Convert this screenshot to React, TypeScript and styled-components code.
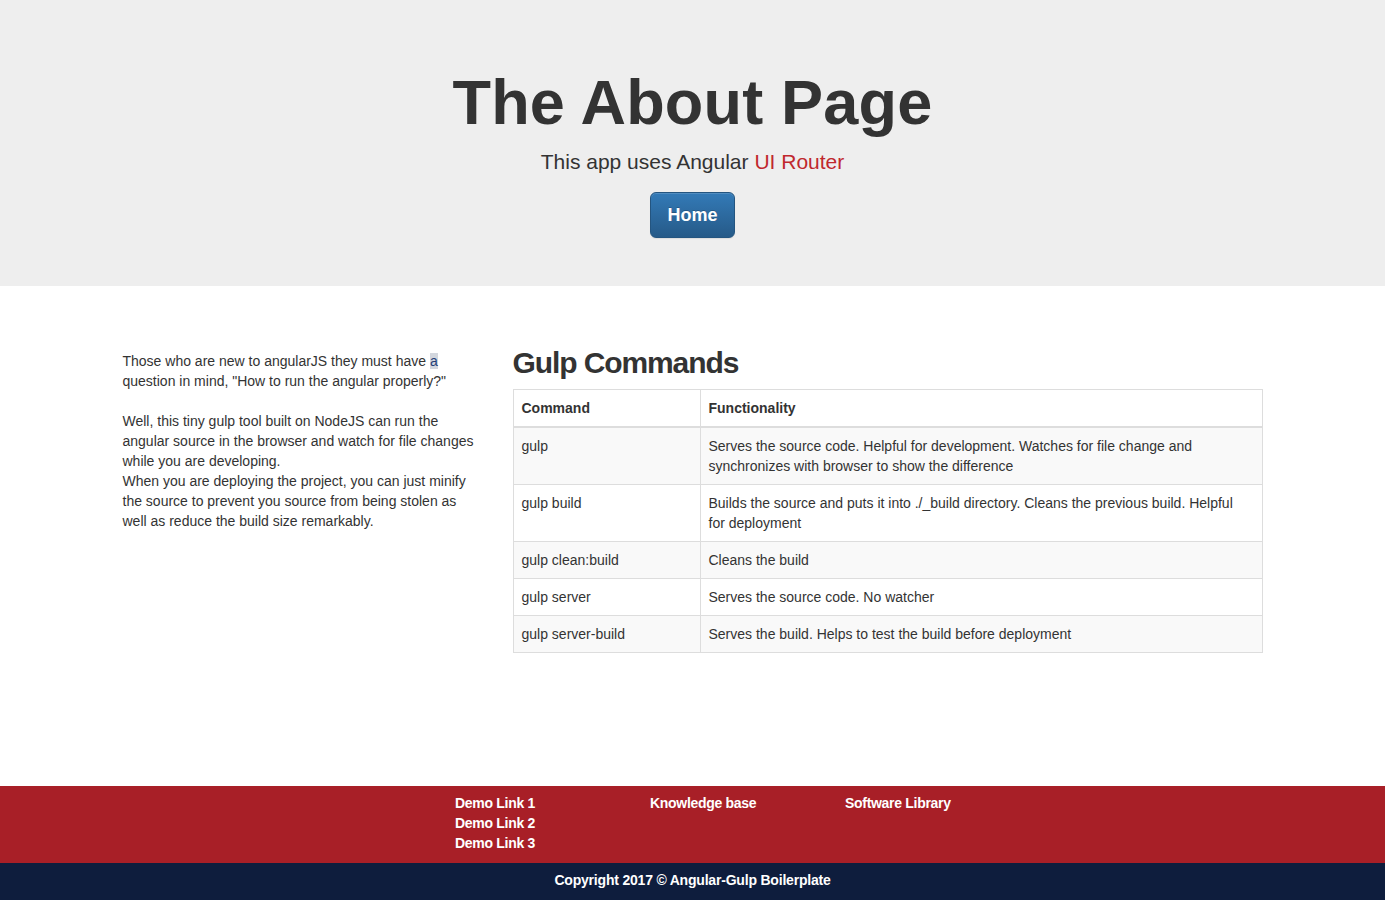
import React from "react";
import styled, { createGlobalStyle } from "styled-components";

const GlobalStyle = createGlobalStyle`
  * { box-sizing: border-box; }
  html, body { margin: 0; padding: 0; }
  body {
    font-family: "Liberation Sans", Arial, sans-serif;
    font-size: 14px;
    line-height: 1.42857;
    color: #333;
    background: #fff;
  }
`;

const Page = styled.div`
  min-height: 100vh;
  display: flex;
  flex-direction: column;
`;

const Jumbotron = styled.header`
  background: #eeeeee;
  padding: 48px 0;
  text-align: center;
`;

const Title = styled.h1`
  margin: 20px 0 10px;
  font-size: 63px;
  line-height: 1.1;
  font-weight: 700;
  color: #333;
  letter-spacing: 0.2px;
`;

const Lead = styled.p`
  margin: 0 0 15px;
  font-size: 21px;
  line-height: 30px;
  color: #333;
`;

const RedLink = styled.a`
  color: #c0282d;
  text-decoration: none;
`;

const PrimaryButton = styled.a`
  display: inline-block;
  padding: 10px 16px;
  font-size: 18px;
  line-height: 24px;
  font-weight: 700;
  color: #fff;
  text-decoration: none;
  border: 1px solid #245580;
  border-radius: 6px;
  background-image: linear-gradient(to bottom, #337ab7 0%, #265a88 100%);
  box-shadow: inset 0 1px 0 rgba(255, 255, 255, 0.15), 0 1px 1px rgba(0, 0, 0, 0.075);
  text-shadow: 0 -1px 0 rgba(0, 0, 0, 0.2);
`;

const Main = styled.main`
  width: 1170px;
  margin: 0 auto;
  padding: 40px 0 0;
  display: flex;
`;

const Column = styled.section<{ $width: number }>`
  width: ${(p) => p.$width}px;
  padding: 0 15px;
`;

const Intro = styled.p`
  margin: 25px 0 0;
  font-size: 14px;
  line-height: 20px;
`;

const Selected = styled.span`
  background: #d3d7de;
  color: #1f3f78;
`;

const SectionTitle = styled.h2`
  margin: 20px 0 10px;
  font-size: 30px;
  line-height: 33px;
  font-weight: 700;
  letter-spacing: -1.1px;
  color: #333;
`;

const Table = styled.table`
  width: 100%;
  border-collapse: collapse;
  border: 1px solid #ddd;
  margin-bottom: 20px;
`;

const HeadCell = styled.th<{ $width?: number }>`
  text-align: left;
  font-weight: 700;
  padding: 8px;
  line-height: 20px;
  border: 1px solid #ddd;
  border-bottom: 2px solid #ddd;
  vertical-align: bottom;
  ${(p) => (p.$width ? `width: ${p.$width}px;` : "")}
`;

const Row = styled.tr<{ $striped: boolean }>`
  background: ${(p) => (p.$striped ? "#f9f9f9" : "#fff")};
`;

const Cell = styled.td`
  padding: 8px 14px 8px 8px;
  line-height: 20px;
  border: 1px solid #ddd;
  vertical-align: top;
`;

const Footer = styled.footer`
  margin-top: auto;
`;

const LinksBand = styled.div`
  background: #a81f27;
  padding: 7px 0 10px;
`;

const LinksInner = styled.div`
  width: 585px;
  margin: 0 auto;
  display: flex;
`;

const LinkList = styled.ul`
  width: 195px;
  margin: 0;
  padding: 0 0 0 55px;
  list-style: none;
`;

const FooterLink = styled.a`
  display: block;
  color: #fff;
  font-weight: 700;
  font-size: 14px;
  line-height: 20px;
  letter-spacing: -0.3px;
  text-decoration: none;
`;

const CopyBand = styled.div`
  background: #0e1d3d;
  color: #fff;
  font-weight: 700;
  text-align: center;
  padding: 7px 0 10px;
  line-height: 20px;
  letter-spacing: -0.2px;
`;

const commands: [string, string][] = [
  [
    "gulp",
    "Serves the source code. Helpful for development. Watches for file change and synchronizes with browser to show the difference",
  ],
  [
    "gulp build",
    "Builds the source and puts it into ./_build directory. Cleans the previous build. Helpful for deployment",
  ],
  ["gulp clean:build", "Cleans the build"],
  ["gulp server", "Serves the source code. No watcher"],
  ["gulp server-build", "Serves the build. Helps to test the build before deployment"],
];

const footerColumns: string[][] = [
  ["Demo Link 1", "Demo Link 2", "Demo Link 3"],
  ["Knowledge base"],
  ["Software Library"],
];

export default function App() {
  return (
    <>
      <GlobalStyle />
      <Page>
        <Jumbotron>
          <Title>The About Page</Title>
          <Lead>
            This app uses Angular <RedLink href="#">UI Router</RedLink>
          </Lead>
          <PrimaryButton href="#">Home</PrimaryButton>
        </Jumbotron>

        <Main>
          <Column $width={390}>
            <Intro>
              Those who are new to angularJS they must have <Selected>a</Selected> question in mind,
              "How to run the angular properly?"
              <br />
              <br />
              Well, this tiny gulp tool built on NodeJS can run the angular source in the browser and
              watch for file changes while you are developing.
              <br />
              When you are deploying the project, you can just minify the source to prevent you
              source from being stolen as well as reduce the build size remarkably.
            </Intro>
          </Column>
          <Column $width={780}>
            <SectionTitle>Gulp Commands</SectionTitle>
            <Table>
              <thead>
                <tr>
                  <HeadCell $width={187}>Command</HeadCell>
                  <HeadCell>Functionality</HeadCell>
                </tr>
              </thead>
              <tbody>
                {commands.map(([cmd, desc], i) => (
                  <Row key={cmd} $striped={i % 2 === 0}>
                    <Cell>{cmd}</Cell>
                    <Cell>{desc}</Cell>
                  </Row>
                ))}
              </tbody>
            </Table>
          </Column>
        </Main>

        <Footer>
          <LinksBand>
            <LinksInner>
              {footerColumns.map((col, i) => (
                <LinkList key={i}>
                  {col.map((label) => (
                    <li key={label}>
                      <FooterLink href="#">{label}</FooterLink>
                    </li>
                  ))}
                </LinkList>
              ))}
            </LinksInner>
          </LinksBand>
          <CopyBand>Copyright 2017 © Angular-Gulp Boilerplate</CopyBand>
        </Footer>
      </Page>
    </>
  );
}
